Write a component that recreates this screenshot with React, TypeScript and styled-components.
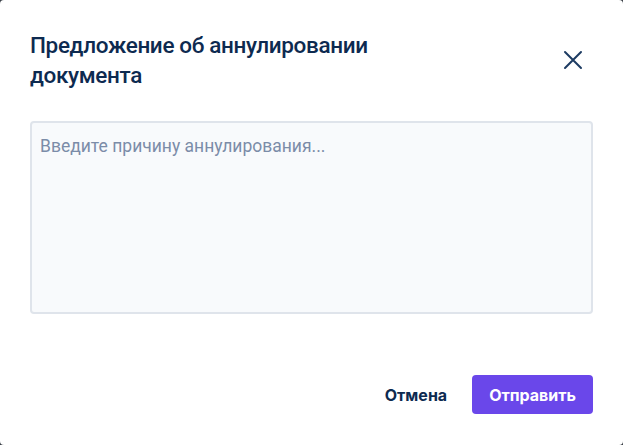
import styled, { createGlobalStyle } from 'styled-components'

const GlobalStyle = createGlobalStyle`
  html, body {
    margin: 0;
    padding: 0;
    background: #3a3f47;
  }
  * {
    box-sizing: border-box;
  }
`

const Dialog = styled.div`
  width: 623px;
  height: 445px;
  background: #ffffff;
  border-radius: 4px;
  padding: 30px 30px 31px 30px;
  display: flex;
  flex-direction: column;
  font-family: 'Roboto', 'Noto Sans', sans-serif;
`

const Header = styled.div`
  display: flex;
  align-items: center;
  justify-content: space-between;
`

const Title = styled.h2`
  margin: 0;
  font-size: 22.5px;
  font-weight: 500;
  line-height: 30px;
  letter-spacing: -0.35px;
  color: #0d2a50;
  max-width: 400px;
`

const CloseButton = styled.button`
  width: 40px;
  height: 40px;
  border: none;
  background: transparent;
  display: flex;
  align-items: center;
  justify-content: center;
  padding: 0;
  cursor: pointer;
  color: #1d3b62;
`

const Reason = styled.textarea`
  margin-top: 31px;
  height: 193px;
  width: 100%;
  resize: none;
  border: 2px solid #dfe4eb;
  border-radius: 4px;
  background: #f8fafc;
  padding: 12px 8px;
  font-family: 'Roboto', 'Noto Sans', sans-serif;
  font-size: 17.5px;
  line-height: 22px;
  color: #0d2a50;
  outline: none;

  &::placeholder {
    color: #7b8ca8;
  }
`

const Footer = styled.div`
  margin-top: auto;
  display: flex;
  justify-content: flex-end;
  gap: 9px;
`

const Button = styled.button<{ primary?: boolean }>`
  height: 39px;
  padding: 0 ${(p) => (p.primary ? '17px' : '16px')};
  border: none;
  border-radius: 4px;
  font-family: 'Inter', 'Noto Sans', sans-serif;
  font-size: 16px;
  font-weight: 700;
  cursor: pointer;
  color: ${(p) => (p.primary ? '#ffffff' : '#0d2a50')};
  background: ${(p) => (p.primary ? '#6a47ea' : 'transparent')};
`

const CloseIcon = () => (
  <svg width="20" height="20" viewBox="0 0 20 20" fill="none">
    <path d="M2 2L18 18M18 2L2 18" stroke="currentColor" strokeWidth="2" strokeLinecap="round" />
  </svg>
)

const App = () => {
  return (
    <>
      <GlobalStyle />
      <Dialog>
        <Header>
          <Title>Предложение об аннулировании документа</Title>
          <CloseButton aria-label="Закрыть">
            <CloseIcon />
          </CloseButton>
        </Header>
        <Reason placeholder="Введите причину аннулирования..." />
        <Footer>
          <Button>Отмена</Button>
          <Button primary>Отправить</Button>
        </Footer>
      </Dialog>
    </>
  )
}

export default App
